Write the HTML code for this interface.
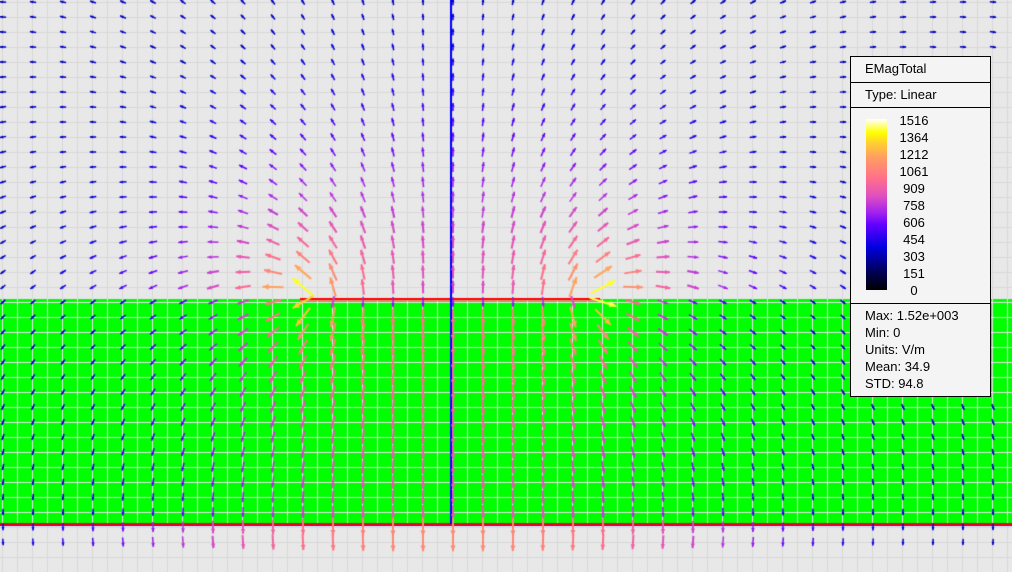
<!DOCTYPE html>
<html><head><meta charset="utf-8">
<style>
html,body{margin:0;padding:0;}
body{width:1012px;height:572px;overflow:hidden;background:#e8e8e8;position:relative;font-family:"Liberation Sans",sans-serif;}
#c{position:absolute;left:0;top:0;}
.leg{position:absolute;left:850px;top:56px;width:139px;height:339px;background:#f4f4f4;border:1px solid #000;font-size:13px;color:#000;}
.leg .r{border-bottom:1px solid #000;padding-left:14px;box-sizing:border-box;}
.bar{position:absolute;left:15px;top:11px;width:21px;height:171px;background:linear-gradient(to top,#000 0%,#000050 10%,#0000e0 25%,#6000ff 38%,#a020f0 45%,#e050c0 55%,#ff6e8c 65%,#ffa060 78%,#ffd030 86%,#ffff00 92%,#fff 100%);}
.nums{position:absolute;left:40px;top:4px;width:46px;text-align:center;line-height:17px;}
</style></head><body>
<canvas id="c" width="1012" height="572"></canvas>
<div class="leg">
 <div class="r" style="height:26px;line-height:24px;">EMagTotal</div>
 <div class="r" style="height:25px;line-height:24px;">Type: Linear</div>
 <div class="r" style="height:196px;position:relative;">
  <div class="bar"></div>
  <div class="nums">1516<br>1364<br>1212<br>1061<br>909<br>758<br>606<br>454<br>303<br>151<br>0</div>
 </div>
 <div style="padding:3px 0 0 14px;line-height:17px;">Max: 1.52e+003<br>Min: 0<br>Units: V/m<br>Mean: 34.9<br>STD: 94.8</div>
</div>
<script>
var c=document.getElementById('c').getContext('2d');
c.fillStyle='#e8e8e8';c.fillRect(0,0,1012,572);
c.fillStyle='#00ff00';c.fillRect(0,299,1012,226);
for(var x=2;x<1012;x+=15){c.fillStyle='#d8d8d8';c.fillRect(x,0,1,572);c.fillStyle='#e4e4e4';c.fillRect(x,299,1,226);}
for(var y=2;y<572;y+=15){c.fillStyle='#d8d8d8';c.fillRect(0,y,1012,1);if(y>299&&y<525){c.fillStyle='#e4e4e4';c.fillRect(0,y,1012,1);}}
c.fillStyle='#ff0000';c.fillRect(0,523,1012,2);c.fillStyle='#2020ff';c.fillRect(0,525,1012,1);
c.fillStyle='#ff0000';c.fillRect(300,298,300,2);c.fillStyle='#ff8080';c.fillRect(300,300,300,1);
c.fillStyle='#0000ff';c.fillRect(450,0,2,524);
var Q=[];for(var i=0;i<=60;i++){var u=-1+2*i/60;var w=1/Math.sqrt(Math.max(1-u*u,0.1));Q.push([450+150*u,300,w]);Q.push([450+150*u,748,-w]);}
function E(x,y){var ex=0,ey=0;for(var k=0;k<Q.length;k++){var dx=x-Q[k][0],dy=y-Q[k][1];var r2=dx*dx+dy*dy+25;ex+=Q[k][2]*dx/r2;ey+=Q[k][2]*dy/r2;}if(y>300&&y<524){ex*=0.7;ey*=0.7;}return[ex,ey];}
var stops=[[0,0,0,0],[0.1,0,0,80],[0.25,0,0,224],[0.38,96,0,255],[0.45,160,32,240],[0.55,224,80,192],[0.65,255,110,140],[0.78,255,160,96],[0.86,255,208,48],[0.92,255,255,0],[1,255,255,255]];
function col(t){for(var i=1;i<stops.length;i++){if(t<=stops[i][0]){var a=stops[i-1],b=stops[i],f=(t-a[0])/(b[0]-a[0]);return 'rgb('+Math.round(a[1]+f*(b[1]-a[1]))+','+Math.round(a[2]+f*(b[2]-a[2]))+','+Math.round(a[3]+f*(b[3]-a[3]))+')';}}return '#fff';}
var e0=E(451,0),m0=Math.hypot(e0[0],e0[1]);var e1=E(300,292),m1=Math.hypot(e1[0],e1[1]);
for(var gx=3;gx<1012;gx+=30){for(var gy=2;gy<545;gy+=15){
 if(gx>845&&gx<995&&gy>50&&gy<400)continue;
 var e=E(gx,gy),m=Math.hypot(e[0],e[1]);if(m<1e-9)continue;
 var r=Math.log(m/m0)/Math.log(m1/m0);
 var t=0.22+0.78*Math.pow(Math.max(r,0),1.2);t=Math.max(0.2,Math.min(1,t));
 var L=5+26*Math.pow(t,2);var ux=e[0]/m,uy=e[1]/m;
 var x0=gx-ux*L/2,y0=gy-uy*L/2,x1=gx+ux*L/2,y1=gy+uy*L/2;
 c.strokeStyle=col(t);c.fillStyle=col(t);c.lineWidth=t>0.5?2:1.5;
 c.beginPath();c.moveTo(x0,y0);c.lineTo(x1,y1);c.stroke();
 var h=Math.min(2+L*0.2,7);c.beginPath();c.moveTo(x1,y1);c.lineTo(x1-ux*h-uy*h*0.45,y1-uy*h+ux*h*0.45);c.lineTo(x1-ux*h+uy*h*0.45,y1-uy*h-ux*h*0.45);c.fill();
}}
</script>
</body></html>
